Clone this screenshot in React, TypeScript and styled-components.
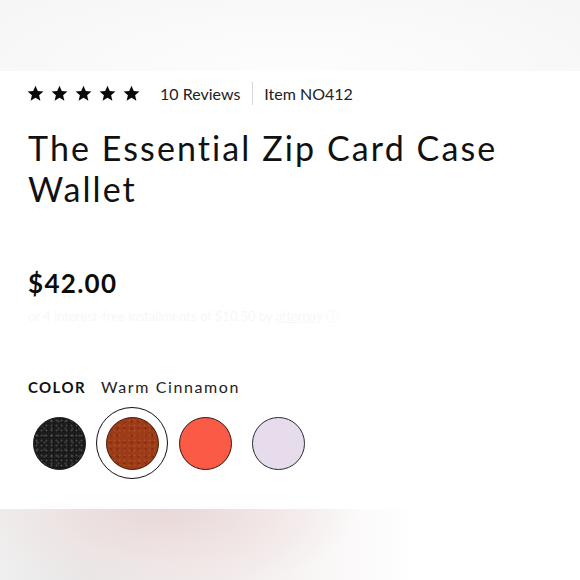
import React from "react";
import styled, { createGlobalStyle } from "styled-components";

const Global = createGlobalStyle`
  html, body { margin: 0; padding: 0; background: #ffffff; }
  body { font-family: "Lato", "Liberation Sans", sans-serif; color: #111; }
`;

const Page = styled.div`
  width: 580px;
  height: 580px;
  display: flex;
  flex-direction: column;
  overflow: hidden;
  background: #fff;
`;

const TopBand = styled.div`
  height: 71px;
  flex: none;
  background: radial-gradient(ellipse 70% 160% at 50% 100%, #fdfdfd 0%, #f9f9f9 55%, #f5f5f5 100%);
`;

const Main = styled.main`
  flex: 1;
  padding: 10px 0 0 28px;
  display: flex;
  flex-direction: column;
`;

const RatingRow = styled.div`
  display: flex;
  align-items: center;
  height: 24px;
`;

const Stars = styled.div`
  display: flex;
  gap: 7px;
  margin-right: 20px;
  margin-left: -1px;
`;

const Meta = styled.span`
  font-size: 16px;
  color: #222;
`;

const Divider = styled.span`
  width: 1px;
  height: 23px;
  background: #d6d6d6;
  margin: 0 11px 0 12px;
`;

const Title = styled.h1`
  margin: 22px 0 0;
  font-size: 34px;
  line-height: 41px;
  font-weight: 400;
  color: #111;
  letter-spacing: 2.1px;
  width: 500px;
`;

const Price = styled.div`
  margin-top: 59px;
  font-size: 26px;
  line-height: 30px;
  font-weight: 700;
  color: #0c0c0c;
  letter-spacing: 1.3px;
`;

const Faint = styled.div`
  margin-top: 10px;
  font-size: 13px;
  line-height: 16px;
  color: #f7f7f7;
  span { text-decoration: underline; }
`;

const ColorRow = styled.div`
  margin-top: 53px;
  display: flex;
  align-items: baseline;
  gap: 15px;
`;

const ColorLabel = styled.span`
  font-size: 15px;
  font-weight: 700;
  letter-spacing: 1.4px;
  color: #111;
`;

const ColorName = styled.span`
  font-size: 16px;
  color: #222;
  letter-spacing: 1.6px;
`;

const Swatches = styled.div`
  margin-top: 11px;
  margin-left: -5px;
  display: flex;
  align-items: center;
  gap: 1px;
`;

const Ring = styled.div<{ $selected?: boolean }>`
  width: 72px;
  height: 72px;
  flex: none;
  border-radius: 50%;
  box-sizing: border-box;
  border: 1.8px solid ${(p) => (p.$selected ? "#111" : "transparent")};
  display: flex;
  align-items: center;
  justify-content: center;
`;

const Swatch = styled.div<{ $color: string; $texture?: string; $border: string }>`
  width: 53px;
  height: 53px;
  border-radius: 50%;
  box-sizing: border-box;
  border: 1.5px solid ${(p) => p.$border};
  background-color: ${(p) => p.$color};
  background-image: ${(p) => p.$texture || "none"};
  background-size: 5px 5px, 7px 7px, 3px 3px;
`;

const BottomBand = styled.div`
  height: 71px;
  flex: none;
  background:
    radial-gradient(ellipse 45% 160% at 28% 0%, rgba(232, 214, 214, 0.9) 0%, rgba(240, 226, 226, 0.6) 45%, rgba(255, 255, 255, 0) 75%),
    linear-gradient(90deg, #efefef 0%, #e9e7e7 15%, #f3eded 40%, #fbf9f9 60%, #ffffff 72%);
`;

const Star = () => (
  <svg width="17" height="17" viewBox="0 0 24 24">
    <polygon
      points="12,1 15.2,8.4 23.2,9.1 17.1,14.4 18.9,22.3 12,18.1 5.1,22.3 6.9,14.4 0.8,9.1 8.8,8.4"
      fill="#0a0a0a"
    />
  </svg>
);

const swatches = [
  {
    color: "#1c1c1c",
    border: "#1a1a1a",
    texture:
      "radial-gradient(circle, rgba(120,120,120,0.45) 0.8px, transparent 1.3px), radial-gradient(circle, rgba(90,90,90,0.4) 1px, transparent 1.6px), radial-gradient(circle, rgba(0,0,0,0.5) 0.6px, transparent 1px)",
  },
  {
    color: "#9c3b17",
    border: "#4a1a08",
    texture:
      "radial-gradient(circle, rgba(190,95,55,0.45) 0.8px, transparent 1.3px), radial-gradient(circle, rgba(110,35,10,0.45) 1px, transparent 1.6px), radial-gradient(circle, rgba(170,70,35,0.4) 0.6px, transparent 1px)",
    selected: true,
  },
  { color: "#fb5a47", border: "#3a1410" },
  { color: "#e6dcec", border: "#2a2a30" },
];

export default function App() {
  return (
    <>
      <Global />
      <Page>
        <TopBand />
        <Main>
          <RatingRow>
            <Stars>
              {[0, 1, 2, 3, 4].map((i) => (
                <Star key={i} />
              ))}
            </Stars>
            <Meta>10 Reviews</Meta>
            <Divider />
            <Meta>Item NO412</Meta>
          </RatingRow>
          <Title>The Essential Zip Card Case Wallet</Title>
          <Price>$42.00</Price>
          <Faint>
            or 4 interest-free installments of $10.50 by <span>afterpay</span> ⓘ
          </Faint>
          <ColorRow>
            <ColorLabel>COLOR</ColorLabel>
            <ColorName>Warm Cinnamon</ColorName>
          </ColorRow>
          <Swatches>
            {swatches.map((s, i) => (
              <Ring key={i} $selected={s.selected}>
                <Swatch $color={s.color} $border={s.border} $texture={s.texture} />
              </Ring>
            ))}
          </Swatches>
        </Main>
        <BottomBand />
      </Page>
    </>
  );
}
